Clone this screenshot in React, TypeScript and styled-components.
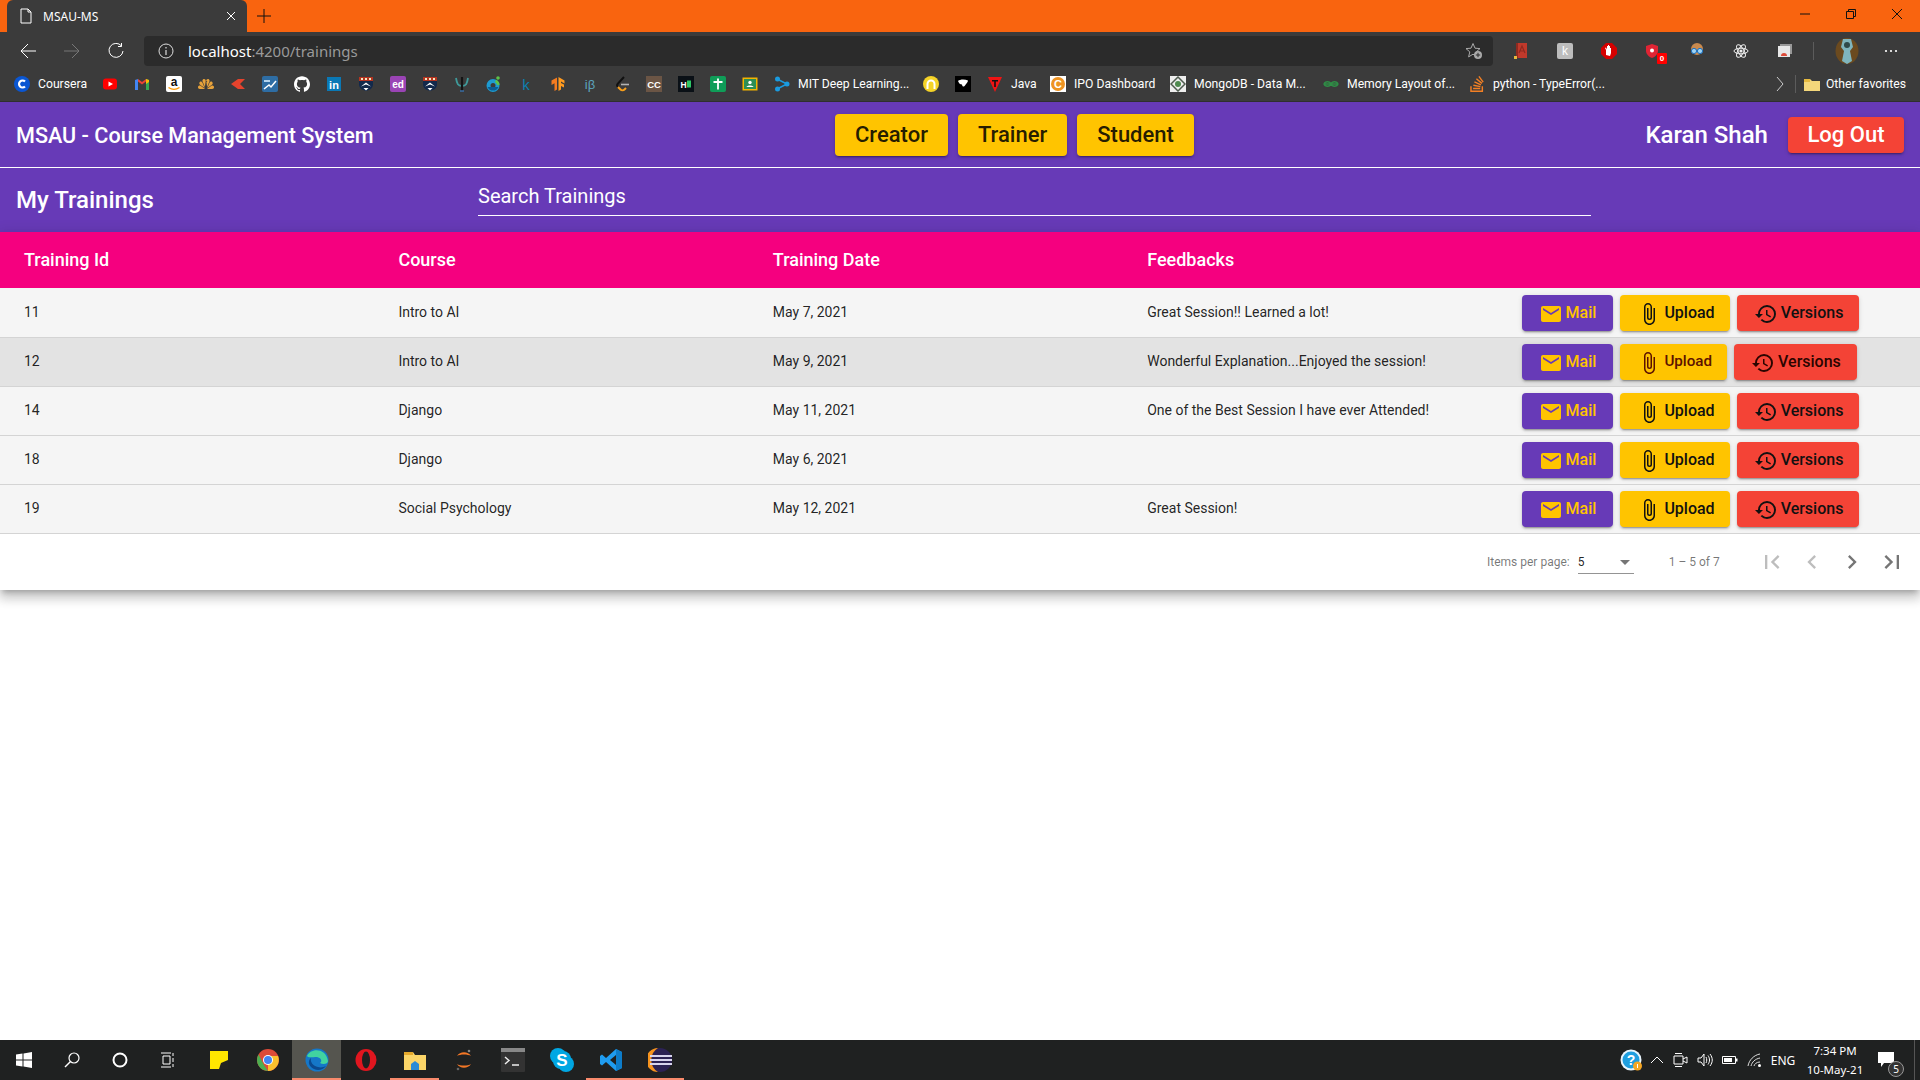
import React from 'react'
import styled, { createGlobalStyle } from 'styled-components'
import {
  MdMail,
  MdAttachFile,
  MdHistory,
  MdFirstPage,
  MdChevronLeft,
  MdChevronRight,
  MdLastPage,
  MdArrowDropDown,
} from 'react-icons/md'
import { SiGithub, SiStackoverflow, SiNbc } from 'react-icons/si'

type Training = {
  id: number
  course: string
  date: string
  feedback: string
  hovered?: boolean
}

const trainings: Training[] = [
  { id: 11, course: 'Intro to AI', date: 'May 7, 2021', feedback: 'Great Session!! Learned a lot!' },
  { id: 12, course: 'Intro to AI', date: 'May 9, 2021', feedback: 'Wonderful Explanation...Enjoyed the session!', hovered: true },
  { id: 14, course: 'Django', date: 'May 11, 2021', feedback: 'One of the Best Session I have ever Attended!' },
  { id: 18, course: 'Django', date: 'May 6, 2021', feedback: '' },
  { id: 19, course: 'Social Psychology', date: 'May 12, 2021', feedback: 'Great Session!' },
]

const GlobalStyle = createGlobalStyle`
  html, body {
    margin: 0;
    height: 100%;
    background: #fff;
    overflow: hidden;
  }
  * {
    box-sizing: border-box;
  }
`

const Screen = styled.div`
  display: flex;
  flex-direction: column;
  height: 1080px;
  font-family: Roboto, 'Liberation Sans', sans-serif;
`

/* browser chrome */

const TabStrip = styled.div`
  display: flex;
  align-items: flex-end;
  height: 32px;
  padding-left: 7px;
  background: #f9640f;
`

const Tab = styled.div`
  display: flex;
  align-items: center;
  width: 240px;
  height: 32px;
  padding: 0 10px 0 11px;
  background: #3b3b3b;
  border-radius: 6px 6px 0 0;
  color: #fff;
  font: 12px 'Noto Sans', sans-serif;
`

const TabTitle = styled.span`
  flex: 1;
  margin-left: 9px;
`

const NewTab = styled.div`
  display: flex;
  align-items: center;
  justify-content: center;
  width: 34px;
  height: 32px;
`

const WindowControls = styled.div`
  display: flex;
  margin-left: auto;
  height: 32px;
`

const WindowButton = styled.div`
  display: flex;
  align-items: center;
  justify-content: center;
  width: 46px;
  height: 28px;
`

const Toolbar = styled.div`
  display: flex;
  align-items: flex-end;
  height: 34px;
  padding-left: 6px;
  background: #3b3b3b;
`

const ToolButton = styled.div`
  display: flex;
  flex: none;
  align-items: center;
  justify-content: center;
  width: 44px;
  height: 30px;
  position: relative;
`

const AddressBar = styled.div`
  display: flex;
  align-items: center;
  width: 1349px;
  height: 30px;
  margin: 0 6px;
  padding: 0 10px 0 14px;
  background: #2b2b2b;
  border-radius: 4px;
  font: 15px 'Noto Sans', sans-serif;
  color: #fff;
`

const UrlHost = styled.span`
  margin-left: 14px;
`

const UrlPath = styled.span`
  flex: 1;
  color: #9a9a9a;
`

const ShieldIcon = styled.span`
  display: flex;
  margin-right: 2px;
`

const ExtBadge = styled.span`
  position: absolute;
  right: 8px;
  bottom: 2px;
  width: 10px;
  height: 11px;
  background: #f00;
  border-radius: 1px;
  color: #fff;
  font: bold 8px/11px 'Liberation Sans', sans-serif;
  text-align: center;
`

const ToolDivider = styled.div`
  flex: none;
  width: 1px;
  height: 18px;
  margin: 0 11px 6px 6px;
  background: #5c5c5c;
`

const BookmarkBar = styled.div`
  display: flex;
  align-items: center;
  height: 36px;
  padding-left: 6px;
  background: #3b3b3b;
  border-bottom: 1px solid #2f2f2f;
  color: #fff;
  font: 12.2px Roboto, sans-serif;
`

const Bookmark = styled.div`
  display: flex;
  flex: none;
  align-items: center;
  gap: 8px;
  padding: 0 8px;
  height: 24px;
`

const BookmarkLabel = styled.span<{ $width: number }>`
  display: block;
  width: ${(p) => p.$width}px;
  white-space: nowrap;
`

const BookmarkEnd = styled.div`
  display: flex;
  align-items: center;
  gap: 6px;
  margin-left: auto;
  padding-right: 14px;
`

const BookmarkDivider = styled.div`
  width: 1px;
  height: 18px;
  margin: 0 2px 0 1px;
  background: #5c5c5c;
`

/* app header */

const NavBar = styled.header`
  display: flex;
  align-items: center;
  height: 66px;
  padding: 0 16px;
  background: #673ab7;
  border-bottom: 1px solid #fff;
  color: #fff;
`

const AppTitle = styled.div`
  width: 819px;
  margin-top: 2px;
  font-size: 21.6px;
  font-weight: 500;
`

const RoleButtons = styled.div`
  display: flex;
  gap: 10px;
`

const RoleButton = styled.button`
  height: 42px;
  padding: 0 20px;
  border: 0;
  border-radius: 4px;
  background: #ffc400;
  color: rgba(0, 0, 0, 0.87);
  font: 500 22px Roboto, sans-serif;
  box-shadow: 0 3px 1px -2px rgba(0, 0, 0, 0.2), 0 2px 2px 0 rgba(0, 0, 0, 0.14), 0 1px 5px 0 rgba(0, 0, 0, 0.12);
`

const UserArea = styled.div`
  display: flex;
  align-items: center;
  gap: 20px;
  margin-left: auto;
`

const UserName = styled.span`
  font-size: 24px;
  font-weight: 500;
`

const LogOut = styled.button`
  height: 36px;
  padding: 0 19.5px;
  border: 0;
  border-radius: 4px;
  background: #f44336;
  color: #fff;
  font: 500 22px Roboto, sans-serif;
  box-shadow: 0 3px 1px -2px rgba(0, 0, 0, 0.2), 0 2px 2px 0 rgba(0, 0, 0, 0.14), 0 1px 5px 0 rgba(0, 0, 0, 0.12);
`

const SubBar = styled.div`
  display: flex;
  align-items: center;
  height: 64px;
  padding-left: 16px;
  background: #673ab7;
  color: #fff;
`

const PageTitle = styled.h1`
  width: 462px;
  margin: 0;
  font-size: 24px;
  font-weight: 500;
`

const SearchInput = styled.input`
  width: 1113px;
  height: 32px;
  padding: 0 0 7px;
  border: 0;
  border-bottom: 1px solid #fff;
  outline: 0;
  background: transparent;
  color: #fff;
  font: 400 20px Roboto, sans-serif;
  &::placeholder {
    color: #fff;
    opacity: 1;
  }
`

/* table */

const Card = styled.section`
  background: #fff;
  box-shadow: 0 5px 5px -3px rgba(0, 0, 0, 0.2), 0 8px 10px 1px rgba(0, 0, 0, 0.14), 0 3px 14px 2px rgba(0, 0, 0, 0.12);
`

const HeaderRow = styled.div`
  display: grid;
  grid-template-columns: repeat(5, 1fr);
  align-items: center;
  height: 56px;
  padding: 0 24px 2px;
  background: #f5007f;
  color: #fff;
  font-size: 18px;
  font-weight: 500;
`

const Row = styled.div<{ $hovered?: boolean; $first?: boolean }>`
  display: grid;
  grid-template-columns: repeat(5, 1fr);
  align-items: center;
  height: ${(p) => (p.$first ? 50 : 49)}px;
  padding: ${(p) => (p.$first ? 1 : 0)}px 24px 0;
  background: ${(p) => (p.$hovered ? '#e3e3e3' : '#f5f5f5')};
  border-bottom: 1px solid #d4d4d4;
  color: rgba(0, 0, 0, 0.87);
  font-size: 14px;
  > span {
    margin-bottom: 2px;
  }
`

const Actions = styled.div`
  display: flex;
  gap: 7px;
`

const ActionButton = styled.button<{ $kind: 'mail' | 'upload' | 'versions'; $hovered?: boolean }>`
  display: inline-flex;
  align-items: center;
  gap: 3px;
  height: 36px;
  padding: 0 ${(p) => (p.$kind === 'upload' ? 15 : p.$kind === 'mail' ? 17 : 16)}px 2px 17px;
  border: 0;
  border-radius: 4px;
  white-space: nowrap;
  font-family: Roboto, sans-serif;
  font-weight: 500;
  font-size: ${(p) => (p.$kind === 'upload' && p.$hovered ? '15.2px' : '16px')};
  background: ${(p) => (p.$kind === 'mail' ? '#673ab7' : p.$kind === 'upload' ? '#ffc400' : '#f44336')};
  color: ${(p) => {
    if (p.$kind === 'mail') return '#ffc400'
    if (!p.$hovered) return '#111'
    return p.$kind === 'upload' ? '#5c1200' : '#2a0500'
  }};
  box-shadow: 0 3px 1px -2px rgba(0, 0, 0, 0.2), 0 2px 2px 0 rgba(0, 0, 0, 0.14), 0 1px 5px 0 rgba(0, 0, 0, 0.12);
  svg {
    flex: none;
    width: 24px;
    height: 24px;
    margin-top: 4px;
  }
`

const Paginator = styled.div`
  display: flex;
  align-items: center;
  height: 56px;
  padding-left: 1487px;
  color: rgba(0, 0, 0, 0.54);
  font-size: 12px;
`

const PageSelect = styled.div`
  display: flex;
  align-items: center;
  justify-content: space-between;
  width: 56px;
  height: 24px;
  margin-left: 8px;
  border-bottom: 1px solid rgba(0, 0, 0, 0.42);
  color: rgba(0, 0, 0, 0.87);
  svg {
    width: 24px;
    height: 24px;
    margin-right: -3px;
    color: rgba(0, 0, 0, 0.54);
  }
`

const RangeLabel = styled.span`
  margin: 0 32px 0 35px;
`

const PageButton = styled.div<{ $disabled?: boolean }>`
  display: flex;
  align-items: center;
  justify-content: center;
  width: 40px;
  height: 40px;
  color: ${(p) => (p.$disabled ? 'rgba(0, 0, 0, 0.26)' : 'rgba(0, 0, 0, 0.54)')};
  svg {
    width: 28px;
    height: 28px;
  }
`

const Blank = styled.div`
  flex: 1;
`

/* taskbar */

const Taskbar = styled.footer`
  display: flex;
  height: 40px;
  background: #1f2121;
  color: #fff;
  font: 12px 'Noto Sans', sans-serif;
`

const TaskButton = styled.div<{ $wide?: boolean; $active?: boolean; $open?: boolean }>`
  display: flex;
  flex: none;
  align-items: center;
  justify-content: center;
  width: ${(p) => (p.$wide ? 48 : 49)}px;
  height: 40px;
  background: ${(p) => (p.$active ? '#55554f' : 'transparent')};
  border-bottom: 2px solid ${(p) => (p.$open || p.$active ? '#f98a6c' : 'transparent')};
  border-top: 2px solid transparent;
`

const TaskApps = styled.div`
  display: flex;
  margin-left: 2px;
`

const Tray = styled.div`
  display: flex;
  align-items: center;
  margin-left: auto;
`

const TrayItem = styled.div<{ $width: number }>`
  display: flex;
  flex: none;
  align-items: center;
  justify-content: center;
  width: ${(p) => p.$width}px;
  height: 40px;
  position: relative;
`

const Clock = styled.div`
  width: 62px;
  margin-left: 5px;
  text-align: center;
  font-size: 11.5px;
  line-height: 19px;
  white-space: nowrap;
`

const NoteBadge = styled.span`
  position: absolute;
  right: 2px;
  bottom: 3px;
  width: 16px;
  height: 16px;
  border: 1px solid #999;
  border-radius: 50%;
  background: #333;
  color: #fff;
  font-size: 10px;
  line-height: 14px;
  text-align: center;
`

const ShowDesktop = styled.div`
  width: 6px;
  height: 40px;
  margin-left: 8px;
  border-left: 1px solid #555;
`

const Ico = ({ children, size = 16, box = 16 }: { children: React.ReactNode; size?: number; box?: number }) => (
  <svg width={size} height={size} viewBox={`0 0 ${box} ${box}`} fill="none">
    {children}
  </svg>
)

const Label = ({ x, y, size, color, children, weight = 700 }: { x: number; y: number; size: number; color: string; children: string; weight?: number }) => (
  <text x={x} y={y} fontSize={size} fontWeight={weight} fontFamily="Liberation Sans, sans-serif" textAnchor="middle" fill={color}>
    {children}
  </text>
)

const PennCrest = () => (
  <Ico>
    <path d="M1 1h14v7c0 4-3 6-7 7-4-1-7-3-7-7z" fill="#13294b" />
    <rect x="1" y="1" width="14" height="4" fill="#b5341f" />
    <path d="M3 2h2v2H3zM7 2h2v2H7zM11 2h2v2h-2z" fill="#f0e6c0" />
    <path d="M3 10.500 8 6.500 13 10.500 8 8.500z" fill="#fff" />
    <path d="M5.500 12h5L8 14.500z" fill="#fff" />
  </Ico>
)

const favicons: React.ReactNode[] = [
  <Ico key="yt">
    <rect x="1" y="2.500" width="14" height="11" rx="3" fill="#f00" />
    <path d="M6.500 5.500 11 8l-4.500 2.500z" fill="#fff" />
  </Ico>,
  <Ico key="gm">
    <path d="M4 5.500 8 8.500l4-3V3L8 6 4 3z" fill="#ea4335" />
    <path d="M1 14V4l3-1v11z" fill="#4285f4" />
    <path d="M15 14V4l-3-1v11z" fill="#34a853" />
    <path d="M12 3l3 1v2l-3 2z" fill="#fbbc04" />
  </Ico>,
  <Ico key="az">
    <rect width="16" height="16" rx="2" fill="#fff" />
    <Label x={8} y={10} size={12} color="#111">a</Label>
    <path d="M2.500 11.500c3.500 2.400 7.500 2.400 11 0" stroke="#f90" strokeWidth="1.400" />
  </Ico>,
  <SiNbc key="nbc" size={16} color="#e8a33b" />,
  <Ico key="kh">
    <path d="M1 8 8 3h7l-5 5 5 5H8z" fill="#e5432d" />
  </Ico>,
  <Ico key="blue">
    <rect width="16" height="16" rx="2" fill="#2e6da4" />
    <path d="M2 13 7 9l2 2 5-6" stroke="#fff" strokeWidth="1.500" />
    <path d="M2 5h6" stroke="#b5d5ee" strokeWidth="2" />
  </Ico>,
  <SiGithub key="gh" size={16} color="#fff" />,
  <Ico key="in">
    <rect x="1" y="1" width="14" height="14" fill="#0a78b5" />
    <Label x={8} y={12.500} size={11} color="#fff">in</Label>
  </Ico>,
  <PennCrest key="penn1" />,
  <Ico key="ed">
    <rect width="16" height="16" rx="2" fill="#9a44b5" />
    <Label x={8} y={11.500} size={10} color="#fff">ed</Label>
  </Ico>,
  <PennCrest key="penn2" />,
  <Ico key="psi">
    <path d="M2 2c1 6 2 8 6 8s5-2 6-8" stroke="#3f9a9a" strokeWidth="1.800" />
    <path d="M8 1v14" stroke="#141414" strokeWidth="2.200" />
    <path d="M6 15h4" stroke="#3a6ea5" strokeWidth="1.500" />
  </Ico>,
  <Ico key="ring">
    <circle cx="7" cy="9.500" r="4.500" stroke="#1d9bd1" strokeWidth="4" />
    <path d="M1.500 11a6 6 0 0 0 11 0z" fill="#0c5c94" />
    <circle cx="12" cy="2" r="1.800" fill="#5cc34a" />
    <path d="M9.500 5a5 5 0 0 1 3 4" stroke="#5cc34a" strokeWidth="2.500" />
  </Ico>,
  <Ico key="k">
    <Label x={8} y={13.500} size={15} color="#0c7fb0" weight={400}>k</Label>
  </Ico>,
  <Ico key="tf">
    <path d="M8 1 1.500 4.500V9l3-1.700V15L7 13.500V1.500z" fill="#f47b20" />
    <path d="M8.500 1v14l2.500-1.500V10l3 1.500V8.500l-3-1.500V5.500l3.500 2V4.500z" fill="#ff9a1f" />
  </Ico>,
  <Ico key="ib">
    <Label x={8} y={12.500} size={13} color="#5ba4bd" weight={400}>iβ</Label>
  </Ico>,
  <Ico key="lc">
    <path d="M10 1 4 7.500c-1 1-1 2.500 0 3.500" stroke="#111" strokeWidth="2" />
    <path d="M4 11l2.500 2.500c1 1 3 1 4 0l1.500-1.500" stroke="#f89f1b" strokeWidth="2" />
    <path d="M7 8.500h8" stroke="#b3b3b3" strokeWidth="1.600" />
  </Ico>,
  <Ico key="cc">
    <rect width="16" height="16" fill="#6b5545" />
    <Label x={8} y={11.500} size={9.500} color="#fff">CC</Label>
  </Ico>,
  <Ico key="h">
    <rect width="16" height="16" fill="#0a1016" />
    <Label x={5.500} y={11.500} size={8.500} color="#fff">H</Label>
    <rect x="9" y="4.500" width="4" height="7" fill="#2ec866" />
  </Ico>,
  <Ico key="cross">
    <rect width="16" height="16" rx="2" fill="#0f9d58" />
    <path d="M8 2.500v11M3.500 6h9" stroke="#fff" strokeWidth="1.800" />
  </Ico>,
  <Ico key="classroom">
    <rect x="0.500" y="1.500" width="15" height="13" fill="#f4b400" />
    <rect x="2" y="3" width="12" height="10" fill="#2d8e55" />
    <circle cx="8" cy="6.500" r="1.700" fill="#fff" />
    <path d="M4.500 11c.5-2 6.500-2 7 0z" fill="#fff" />
  </Ico>,
]

const MitIcon = () => (
  <Ico>
    <path d="M3 3l10 5-10 5" stroke="#1a9be0" strokeWidth="1.500" />
    <circle cx="3.500" cy="3" r="2.500" fill="#1a9be0" />
    <circle cx="13" cy="8" r="2.500" fill="#1a9be0" />
    <circle cx="3.500" cy="13" r="2.500" fill="#1a9be0" />
  </Ico>
)

const Gear = () => (
  <Ico>
    <circle cx="8" cy="8" r="1.600" fill="#eee" />
    <ellipse cx="8" cy="8" rx="7" ry="2.800" stroke="#eee" />
    <ellipse cx="8" cy="8" rx="7" ry="2.800" stroke="#eee" transform="rotate(60 8 8)" />
    <ellipse cx="8" cy="8" rx="7" ry="2.800" stroke="#eee" transform="rotate(120 8 8)" />
  </Ico>
)

const BrowserChrome = () => (
  <>
    <TabStrip>
      <Tab>
        <Ico>
          <path d="M3 1h7l3 3v11H3z M10 1v3h3" stroke="#fff" />
        </Ico>
        <TabTitle>MSAU-MS</TabTitle>
        <Ico size={12} box={12}>
          <path d="M2 2l8 8M10 2l-8 8" stroke="#fff" />
        </Ico>
      </Tab>
      <NewTab>
        <Ico>
          <path d="M8 1v14M1 8h14" stroke="#111" />
        </Ico>
      </NewTab>
      <WindowControls>
        <WindowButton>
          <Ico size={12} box={12}>
            <path d="M1 6h10" stroke="#111" />
          </Ico>
        </WindowButton>
        <WindowButton>
          <Ico size={12} box={12}>
            <path d="M1.500 3.500h7v7h-7zM3.500 3.500v-2h7v7h-2" stroke="#111" />
          </Ico>
        </WindowButton>
        <WindowButton>
          <Ico size={12} box={12}>
            <path d="M1 1l10 10M11 1L1 11" stroke="#111" />
          </Ico>
        </WindowButton>
      </WindowControls>
    </TabStrip>
    <Toolbar>
      <ToolButton>
        <Ico>
          <path d="M16 8H1M8 1 1 8l7 7" stroke="#fff" />
        </Ico>
      </ToolButton>
      <ToolButton>
        <Ico>
          <path d="M0 8h15M8 1l7 7-7 7" stroke="#777" />
        </Ico>
      </ToolButton>
      <ToolButton>
        <Ico>
          <path d="M13.500 3A7 7 0 1 0 15 8M13.500 0v3.500H10" stroke="#fff" />
        </Ico>
      </ToolButton>
      <AddressBar>
        <Ico>
          <circle cx="8" cy="8" r="7" stroke="#ddd" />
          <path d="M8 7v5M8 4v1.500" stroke="#ddd" strokeWidth="1.200" />
        </Ico>
        <UrlHost>localhost</UrlHost>
        <UrlPath>:4200/trainings</UrlPath>
        <Ico size={18} box={18}>
          <path d="M8 1.500l2 4.700 5 .4-3.800 3.300 1.200 5L8 12.200l-4.400 2.700 1.200-5L1 6.600l5-.4z" stroke="#aaa" />
          <circle cx="13" cy="13" r="4" fill="#aaa" />
          <path d="M13 10.800v4.400M10.800 13h4.400" stroke="#2b2b2b" />
        </Ico>
      </AddressBar>
      <ToolButton>
        <Ico>
          <rect x="3" y="0" width="11" height="15" fill="#c0392b" />
          <rect x="3" y="0" width="2" height="15" fill="#8e2a20" />
          <rect x="1" y="13" width="3" height="3" fill="#e6b93f" />
          <path d="M6 10 9 3l3 7M7.500 8h3" stroke="#8e2a20" strokeWidth="1.200" />
        </Ico>
      </ToolButton>
      <ToolButton>
        <Ico>
          <rect width="16" height="16" rx="2" fill="#bdbdbd" />
          <Label x={8} y={12} size={12} color="#fff" weight={400}>k</Label>
        </Ico>
      </ToolButton>
      <ToolButton>
        <Ico>
          <path d="M5 0h6l5 5v6l-5 5H5l-5-5V5z" fill="#d40000" />
          <path d="M5 12V7l-1-2 1-.500 1 2V3h1v3-4h1v4-3h1v4-2h1v5l-1 3z" fill="#fff" />
        </Ico>
      </ToolButton>
      <ToolButton>
        <ShieldIcon>
          <Ico>
            <path d="M8 1l6 2v5c0 3-3 6-6 7-3-1-6-4-6-7V3z" fill="#e02434" />
            <circle cx="8" cy="7.500" r="2" fill="#fff" />
          </Ico>
        </ShieldIcon>
        <ExtBadge>0</ExtBadge>
      </ToolButton>
      <ToolButton>
        <Ico>
          <circle cx="8" cy="6" r="6" fill="#c98a4e" />
          <circle cx="5" cy="8" r="2.600" fill="#9fd4f5" stroke="#1a6fc0" />
          <circle cx="11" cy="8" r="2.600" fill="#9fd4f5" stroke="#1a6fc0" />
        </Ico>
      </ToolButton>
      <ToolButton>
        <Gear />
      </ToolButton>
      <ToolButton>
        <Ico>
          <rect x="3" y="1" width="12" height="10" fill="#999" />
          <rect x="1" y="3" width="12" height="11" fill="#e8e8e8" />
          <path d="M4 13a3 3 0 0 1 6 0z" fill="#dd4b39" />
        </Ico>
      </ToolButton>
      <ToolDivider />
      <ToolButton>
        <Ico size={26} box={26}>
          <ellipse cx="13" cy="13" rx="11.500" ry="13" fill="#6b4a1f" />
          <path d="M9 1l8 0 2 8-3 4 2 10-5 3-5-3 2-10-3-4z" fill="#7fb5bd" />
          <circle cx="13" cy="7" r="3" fill="#2f4a4a" />
        </Ico>
      </ToolButton>
      <ToolButton>
        <Ico>
          <circle cx="3" cy="8" r="1.100" fill="#fff" />
          <circle cx="8" cy="8" r="1.100" fill="#fff" />
          <circle cx="13" cy="8" r="1.100" fill="#fff" />
        </Ico>
      </ToolButton>
    </Toolbar>
    <BookmarkBar>
      <Bookmark>
        <Ico>
          <circle cx="8" cy="8" r="8" fill="#0a56d2" />
          <path d="M11 5.500a3.500 3.500 0 1 0 0 5" stroke="#fff" strokeWidth="2.200" />
        </Ico>
        <BookmarkLabel $width={48}>Coursera</BookmarkLabel>
      </Bookmark>
      {favicons.map((icon, i) => (
        <Bookmark key={i}>{icon}</Bookmark>
      ))}
      <Bookmark>
        <MitIcon />
        <BookmarkLabel $width={109}>MIT Deep Learning...</BookmarkLabel>
      </Bookmark>
      <Bookmark>
        <Ico>
          <circle cx="8" cy="8" r="8" fill="#f5d327" />
          <path d="M4.500 13V8a3.500 3.500 0 0 1 7 0v5" stroke="#fff" strokeWidth="2" />
        </Ico>
      </Bookmark>
      <Bookmark>
        <Ico>
          <rect width="16" height="16" fill="#000" />
          <path d="M3 5c2-2 7-2 10-.500 0 2-2 3-3 5-1 2-3 1-3-1-2 0-3-1-4-3.500z" fill="#fff" />
        </Ico>
      </Bookmark>
      <Bookmark>
        <Ico>
          <path d="M1 1h14L8 16z" fill="#f01414" />
          <path d="M5 4h6v1.500H8.800V11H7.200V5.500H5z" fill="#111" />
        </Ico>
        <BookmarkLabel $width={23}>Java</BookmarkLabel>
      </Bookmark>
      <Bookmark>
        <Ico>
          <rect width="16" height="16" fill="#fff" />
          <circle cx="8" cy="8" r="7" fill="#ee9322" />
          <Label x={8} y={12} size={11} color="#fff">C</Label>
        </Ico>
        <BookmarkLabel $width={80}>IPO Dashboard</BookmarkLabel>
      </Bookmark>
      <Bookmark>
        <Ico>
          <rect width="16" height="16" fill="#eee" />
          <path d="M8 1l7 7-7 7-7-7z" stroke="#4f5b4f" strokeWidth="1.500" />
          <circle cx="8" cy="8" r="3" fill="#4f8a4f" />
        </Ico>
        <BookmarkLabel $width={113}>MongoDB - Data M...</BookmarkLabel>
      </Bookmark>
      <Bookmark>
        <Ico>
          <path d="M8 8c-1-3-6-3-7 0 1 3 6 3 7 0zm0 0c1-3 6-3 7 0-1 3-6 3-7 0zM1 8h14" stroke="#2f8d46" strokeWidth="1.300" />
        </Ico>
        <BookmarkLabel $width={106}>Memory Layout of...</BookmarkLabel>
      </Bookmark>
      <Bookmark>
        <SiStackoverflow size={16} color="#f48024" />
        <BookmarkLabel $width={112}>python - TypeError(...</BookmarkLabel>
      </Bookmark>
      <BookmarkEnd>
        <Ico>
          <path d="M5 1l6 7-6 7" stroke="#ccc" />
        </Ico>
        <BookmarkDivider />
        <Ico>
          <path d="M0 3h6l2 2h8v10H0z" fill="#f4d77b" />
          <path d="M0 3h6v3H0z" fill="#e6b93f" />
        </Ico>
        <span>Other favorites</span>
      </BookmarkEnd>
    </BookmarkBar>
  </>
)

const TrainingRow = ({ row, first }: { row: Training; first: boolean }) => (
  <Row $hovered={row.hovered} $first={first}>
    <span>{row.id}</span>
    <span>{row.course}</span>
    <span>{row.date}</span>
    <span>{row.feedback}</span>
    <Actions>
      <ActionButton $kind="mail">
        <MdMail />
        Mail
      </ActionButton>
      <ActionButton $kind="upload" $hovered={row.hovered}>
        <MdAttachFile />
        Upload
      </ActionButton>
      <ActionButton $kind="versions" $hovered={row.hovered}>
        <MdHistory />
        Versions
      </ActionButton>
    </Actions>
  </Row>
)

const WindowsTaskbar = () => (
  <Taskbar>
    <TaskButton $wide>
      <Ico>
        <path d="M0 2.500 6.500 1.600V7.500H0zM7.500 1.400 16 0v7.500H7.500zM0 8.500h6.500v5.900L0 13.500zM7.500 8.500H16V16l-8.500-1.400z" fill="#fff" />
      </Ico>
    </TaskButton>
    <TaskButton $wide>
      <Ico>
        <circle cx="10" cy="6" r="5" stroke="#fff" strokeWidth="1.200" />
        <path d="M6.500 9.500 1 15" stroke="#fff" strokeWidth="1.400" />
      </Ico>
    </TaskButton>
    <TaskButton $wide>
      <Ico>
        <circle cx="8" cy="8" r="6.500" stroke="#fff" strokeWidth="2" />
      </Ico>
    </TaskButton>
    <TaskButton $wide>
      <Ico>
        <path d="M1 1h10M1 15h10M3 4h7v8H3zM13 1v3M13 6v4M13 12v3" stroke="#fff" />
      </Ico>
    </TaskButton>
    <TaskApps>
      <TaskButton>
        <Ico size={18} box={18}>
          <rect width="18" height="18" fill="#ffe600" />
          <path d="M18 9v9H9l2-6z" fill="#222" />
        </Ico>
      </TaskButton>
      <TaskButton>
        <Ico size={22} box={22}>
          <circle cx="11" cy="11" r="11" fill="#dd4b39" />
          <path d="M11 22a11 11 0 0 0 10-15H11z" fill="#fbc02d" />
          <path d="M1.500 5.500 7 16l4 6a11 11 0 0 1-9.500-16.500z" fill="#4caf50" />
          <circle cx="11" cy="11" r="5" fill="#fff" />
          <circle cx="11" cy="11" r="4" fill="#4285f4" />
        </Ico>
      </TaskButton>
      <TaskButton $active>
        <Ico size={24} box={24}>
          <circle cx="12" cy="12" r="11.500" fill="#1577c8" />
          <path d="M2 8c3-8 19-9 21 5 0 3-5 4-8 2 2-1 2-5-3-6-5 0-9 1-10-1z" fill="#41d3a0" />
          <path d="M9 21c-5-2-7-8-3-11-1 4 2 8 7 9 3 1 6 0 8-1-3 4-8 5-12 3z" fill="#0b4a90" />
        </Ico>
      </TaskButton>
      <TaskButton>
        <Ico size={22} box={22}>
          <ellipse cx="11" cy="11" rx="10.500" ry="11" fill="#e0161f" />
          <ellipse cx="11" cy="11" rx="4" ry="8.500" fill="#1f2121" />
        </Ico>
      </TaskButton>
      <TaskButton $open>
        <Ico size={22} box={22}>
          <path d="M0 3h9l2 3h11v15H0z" fill="#fbd568" />
          <path d="M0 3h9v3H0z" fill="#e5a92c" />
          <path d="M7 21v-6l4-3 4 3v6z" fill="#2a8bd6" />
        </Ico>
      </TaskButton>
      <TaskButton>
        <Ico size={22} box={22}>
          <path d="M4 7c3-5 11-5 14 0-3-2-11-2-14 0zM4 15c3 5 11 5 14 0-3 2-11 2-14 0z" fill="#f37726" />
          <circle cx="5" cy="20" r="1.300" fill="#666" />
          <circle cx="16" cy="2" r="1.300" fill="#888" />
        </Ico>
      </TaskButton>
      <TaskButton>
        <Ico size={24} box={24}>
          <rect width="24" height="24" rx="1" fill="#333" />
          <rect width="24" height="4" fill="#888" />
          <path d="M4 9l4 3.500L4 16M11 17h7" stroke="#eee" strokeWidth="1.500" />
        </Ico>
      </TaskButton>
      <TaskButton>
        <Ico size={24} box={24}>
          <circle cx="8" cy="8" r="8" fill="#00a7e3" />
          <circle cx="16" cy="16" r="8" fill="#00a7e3" />
          <rect x="3" y="3" width="18" height="18" rx="8" fill="#00a7e3" />
          <Label x={12} y={18} size={17} color="#fff">S</Label>
        </Ico>
      </TaskButton>
      <TaskButton $open>
        <Ico size={24} box={24}>
          <path d="M17 1l6 3v16l-6 3L7 14l-4 3.500L1 16V8l2-1.500L7 10z" fill="#1f9cf0" />
          <path d="M17 7l-6 5 6 5z" fill="#1f2121" />
          <path d="M17 1l6 3v16l-6 3z" fill="#0d7cc9" />
        </Ico>
      </TaskButton>
      <TaskButton $open>
        <Ico size={24} box={24}>
          <circle cx="12" cy="12" r="12" fill="#2c2255" />
          <path d="M10 0A12 12 0 0 0 10 24 14 14 0 0 1 10 0z" fill="#f7941e" />
          <path d="M2 8h22M2 12h22M2 16h22" stroke="#d8d4ee" strokeWidth="2" />
        </Ico>
      </TaskButton>
    </TaskApps>
    <Tray>
      <TrayItem $width={28}>
        <Ico size={22} box={22}>
          <circle cx="11" cy="11" r="10.500" fill="#e8f5fd" />
          <circle cx="11" cy="11" r="8.500" fill="#1f9fe0" />
          <Label x={11} y={16} size={14} color="#fff">?</Label>
          <circle cx="17.500" cy="17" r="4.500" fill="#f5a623" />
          <path d="M17.500 15v4" stroke="#fff" />
        </Ico>
      </TrayItem>
      <TrayItem $width={24}>
        <Ico size={12} box={12}>
          <path d="M0 9l6-6 6 6" stroke="#fff" />
        </Ico>
      </TrayItem>
      <TrayItem $width={24}>
        <Ico>
          <path d="M1 4h9v8H1zM10 7l4-2v6l-4-2M2 1.500h7M2 14.500h7" stroke="#fff" />
        </Ico>
      </TrayItem>
      <TrayItem $width={24}>
        <Ico>
          <path d="M1 6h3l3-4v12l-3-4H1zM9 5c1 2 1 4 0 6M11 3.500c2 3 2 6 0 9M13 2c3 4 3 8 0 12" stroke="#fff" />
        </Ico>
      </TrayItem>
      <TrayItem $width={26}>
        <Ico>
          <path d="M.5 4.500h13v7H.5z" stroke="#fff" />
          <rect x="2" y="6" width="8" height="4" fill="#fff" />
          <rect x="14" y="6.500" width="1.500" height="3" fill="#fff" />
        </Ico>
      </TrayItem>
      <TrayItem $width={24}>
        <Ico>
          <path d="M1 14C2 8 7 3 13 2M4 14c1-4 4-7 9-8M7 14c.500-2 2.500-4 6-4" stroke="#ddd" />
          <circle cx="12.500" cy="13.500" r="1.500" fill="#fff" />
        </Ico>
      </TrayItem>
      <TrayItem $width={32}>ENG</TrayItem>
      <Clock>
        7:34 PM
        <br />
        10-May-21
      </Clock>
      <TrayItem $width={40}>
        <Ico size={18} box={18}>
          <path d="M1 1h16v11H7l-3 4v-4H1z" fill="#fff" />
        </Ico>
        <NoteBadge>5</NoteBadge>
      </TrayItem>
      <ShowDesktop />
    </Tray>
  </Taskbar>
)

export default function App() {
  return (
    <Screen>
      <GlobalStyle />
      <BrowserChrome />
      <NavBar>
        <AppTitle>MSAU - Course Management System</AppTitle>
        <RoleButtons>
          <RoleButton>Creator</RoleButton>
          <RoleButton>Trainer</RoleButton>
          <RoleButton>Student</RoleButton>
        </RoleButtons>
        <UserArea>
          <UserName>Karan Shah</UserName>
          <LogOut>Log Out</LogOut>
        </UserArea>
      </NavBar>
      <SubBar>
        <PageTitle>My Trainings</PageTitle>
        <SearchInput placeholder="Search Trainings" />
      </SubBar>
      <Card>
        <HeaderRow>
          <span>Training Id</span>
          <span>Course</span>
          <span>Training Date</span>
          <span>Feedbacks</span>
          <span />
        </HeaderRow>
        {trainings.map((row, i) => (
          <TrainingRow key={row.id} row={row} first={i === 0} />
        ))}
        <Paginator>
          <span>Items per page:</span>
          <PageSelect>
            5
            <MdArrowDropDown />
          </PageSelect>
          <RangeLabel>1 – 5 of 7</RangeLabel>
          <PageButton $disabled>
            <MdFirstPage />
          </PageButton>
          <PageButton $disabled>
            <MdChevronLeft />
          </PageButton>
          <PageButton>
            <MdChevronRight />
          </PageButton>
          <PageButton>
            <MdLastPage />
          </PageButton>
        </Paginator>
      </Card>
      <Blank />
      <WindowsTaskbar />
    </Screen>
  )
}
